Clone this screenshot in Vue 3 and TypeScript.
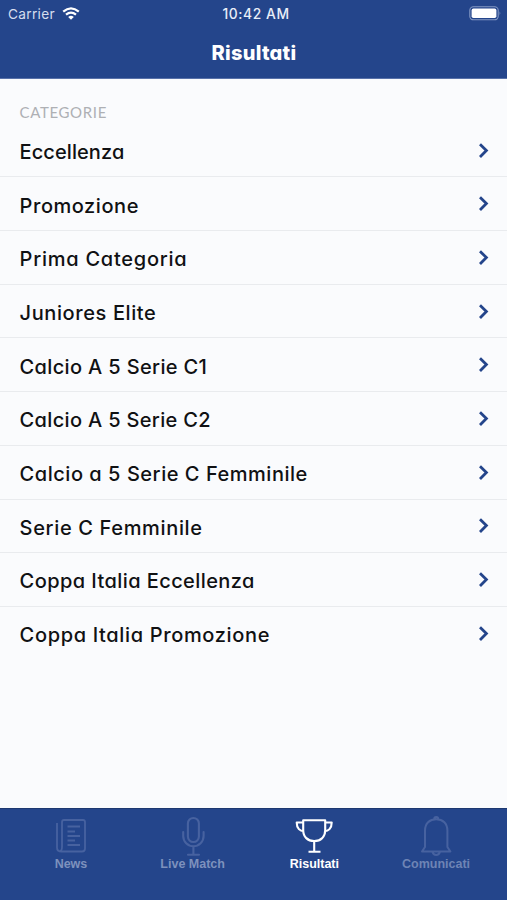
<script setup lang="ts">
interface Category {
  name: string
  tracking: number
}

const categories: Category[] = [
  { name: 'Eccellenza', tracking: 0.08 },
  { name: 'Promozione', tracking: 0.55 },
  { name: 'Prima Categoria', tracking: 0.75 },
  { name: 'Juniores Elite', tracking: 0.6 },
  { name: 'Calcio A 5 Serie C1', tracking: 0.35 },
  { name: 'Calcio A 5 Serie C2', tracking: 0.33 },
  { name: 'Calcio a 5 Serie C Femminile', tracking: 0.53 },
  { name: 'Serie C Femminile', tracking: 0.65 },
  { name: 'Coppa Italia Eccellenza', tracking: 0.42 },
  { name: 'Coppa Italia Promozione', tracking: 0.65 },
]
</script>

<template>
  <div class="screen">
    <header class="top">
      <div class="status">
        <div class="carrier">
          <span>Carrier</span>
          <svg class="wifi" width="18" height="13" viewBox="0 0 18 13">
            <path d="M1.2 4.7Q9-2.1 16.8 4.7M4 7.7q5-4.2 10 0" fill="none" stroke="#fff" stroke-width="2.2" />
            <path d="M6.2 10q2.8-2.3 5.6 0L9 12.8z" fill="#fff" />
          </svg>
        </div>
        <div class="clock">10:42 AM</div>
        <svg class="battery" width="33" height="15" viewBox="0 0 33 15">
          <rect x=".8" y=".8" width="28.4" height="13" rx="3.6" fill="none" stroke="#8398c4" stroke-width="1.1" />
          <rect x="2.6" y="2.6" width="24.8" height="9.4" rx="1.8" fill="#fff" />
          <path d="M30.6 5.2q1.8 2.1 0 4.2z" fill="#8398c4" />
        </svg>
      </div>
      <h1 class="title">Risultati</h1>
    </header>
    <main class="content">
      <h2 class="section">CATEGORIE</h2>
      <ul class="list">
        <li v-for="c in categories" :key="c.name" class="row">
          <span class="name" :style="{ letterSpacing: c.tracking + 'px' }">{{ c.name }}</span>
          <svg class="chevron" width="12" height="18" viewBox="0 0 12 18">
            <path d="M2 2.200L8.400 8.600 2 15" fill="none" stroke="#24458b" stroke-width="2.8" />
          </svg>
        </li>
      </ul>
    </main>
    <nav class="tabs">
      <div class="tab news">
        <svg width="40" height="42" viewBox="0 0 40 42" fill="none" stroke="currentColor" stroke-width="1.8" stroke-linejoin="round">
          <path d="M11 7Q11 5 13 5H32q2 0 2 2v26.5q0 3-3 3H10q-4 0-4-4V8M11 7V32q0 4.5-3 4.5M16.5 11.5H29M16.5 16.5H24M16.5 21H29M16.5 25.5H24M16.5 30H29" />
        </svg>
        <span>News</span>
      </div>
      <div class="tab live">
        <svg width="40" height="42" viewBox="0 0 40 42" fill="none" stroke="currentColor" stroke-width="2.1" stroke-linecap="round">
          <rect x="14.9" y="3" width="11" height="24" rx="5.5" />
          <path d="M10.2 17v4a10.2 10.2 0 0 0 20.4 0v-4M20.4 31.5v8M15 39.7h11" />
        </svg>
        <span>Live Match</span>
      </div>
      <div class="tab active">
        <svg width="40" height="42" viewBox="0 0 40 42" fill="none" stroke="currentColor" stroke-width="2.1" stroke-linejoin="round">
          <path d="M9.2 5.2h22V15c0 7-4.5 11-11 11s-11-4-11-11zM9.200 7.500H2.700c0 6 3.500 8.700 7 8.700M31.200 7.500h6.500c0 6-3.500 8.700-7 8.700M20.200 26v10.500M14.500 36.800h12" />
        </svg>
        <span>Risultati</span>
      </div>
      <div class="tab notices">
        <svg width="40" height="42" viewBox="0 0 40 42" fill="none" stroke="currentColor" stroke-width="2" stroke-linejoin="round">
          <path d="M9 32V15.500C9 8.500 13.500 4.200 20.200 4.200S31.400 8.500 31.400 15.500V32l3 4.500H6zM18.200 4a2 2 0 0 1 4 0M16.500 37a3.800 3.800 0 0 0 7.400 0" />
        </svg>
        <span>Comunicati</span>
      </div>
    </nav>
  </div>
</template>

<style>
body {
  background: #fafbfd;
}
</style>

<style scoped>
.screen {
  display: flex;
  flex-direction: column;
  width: 507px;
  height: 900px;
  overflow: hidden;
  background: #fafbfd;
  font-family: Inter, "Liberation Sans", sans-serif;
}
.top {
  height: 79px;
  box-sizing: border-box;
  background: #24458b;
  border-bottom: 1px solid #5871a9;
  color: #fff;
}
.status {
  display: grid;
  grid-template-columns: 1fr auto 1fr;
  align-items: center;
  height: 27px;
  padding: 0 5px 0 8px;
  font-size: 13.7px;
}
.carrier {
  display: flex;
  align-items: center;
  gap: 7px;
  color: #d5deee;
  letter-spacing: 0.3px;
}
.clock {
  padding-left: 2px;
  font-weight: 500;
  font-size: 13.8px;
  letter-spacing: 0.6px;
  color: #e9eef8;
}
.battery {
  justify-self: end;
}
.title {
  margin: 0;
  height: 51px;
  padding-left: 1px;
  line-height: 52px;
  font-size: 20px;
  letter-spacing: 0.25px;
  font-weight: 800;
  text-align: center;
  font-feature-settings: "cv11";
}
.content {
  flex: 1;
}
.section {
  margin: 0;
  padding: 23px 19.5px 0;
  height: 44.7px;
  box-sizing: border-box;
  font-family: Lato, sans-serif;
  font-size: 15px;
  letter-spacing: 0.65px;
  line-height: 20px;
  font-weight: 400;
  color: #aeb0b4;
}
.list {
  margin: 0;
  padding: 0;
  list-style: none;
}
.row {
  display: flex;
  align-items: center;
  justify-content: space-between;
  box-sizing: border-box;
  height: 53.7px;
  padding: 1px 17px 0 19.6px;
  border-bottom: 1px solid #e9ebee;
}
.row:last-child {
  border-bottom-color: transparent;
}
.name {
  padding-top: 2.6px;
  font-size: 20px;
  font-weight: 550;
  line-height: 26px;
  color: #101113;
  white-space: nowrap;
  font-feature-settings: "cv11";
}
.tabs {
  display: flex;
  justify-content: center;
  height: 92px;
  box-sizing: border-box;
  padding: 6px 10px 0;
  background: #24458b;
  border-top: 1px solid #1d3870;
}
.tab {
  display: flex;
  flex-direction: column;
  align-items: center;
  width: 121.7px;
  color: #4762a0;
  font-family: "Liberation Sans", sans-serif;
  font-size: 12.5px;
  line-height: 15px;
  font-weight: 700;
}
.tab span {
  color: #7d91bd;
}
.tab.active,
.tab.active span {
  color: #fff;
}
.tab.notices span {
  color: #6e84b5;
}
</style>
